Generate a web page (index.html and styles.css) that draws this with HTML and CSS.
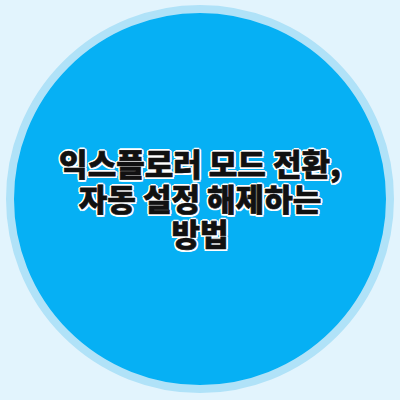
FILE: index.html
```html
<!DOCTYPE HTML>
<html>
<head>
	<meta http-equiv="content-type" content="text/html; charset=utf-8" />
	<title>익스플로러 모드 전환</title>
	<link rel="stylesheet" href="styles.css">
</head>
<body>
	<div class="page">
		<div class="circle">
			<h1 class="title">익스플로러 모드 전환,<br>자동 설정 해제하는<br>방법</h1>
		</div>
	</div>
</body>
</html>
```

FILE: styles.css
```css
 /* Страница */
* {
	margin: 0;
	padding: 0;
	box-sizing: border-box;
}

html, body {
	width: 100%;
	height: 100%;
	background-color: #e2f4fd;
}

.page {
	width: 400px;
	height: 400px;
	padding: 5px 6px 7px 6px;
	display: flex;
	align-items: center;
	justify-content: center;
}

 /* Круг */

.circle {
	width: 388px;
	height: 388px;
	border-radius: 50%;
	border: 8px solid #b0e2f8;
	background-color: #06b0f4;
	display: flex;
	align-items: center;
	justify-content: center;
	padding-bottom: 4px;
}

 /* Заголовок */

.title {
	font-family: "Noto Sans CJK KR", "Noto Sans", sans-serif;
	font-weight: 900;
	font-size: 31px;
	line-height: 35px;
	color: #111;
	text-align: center;
	-webkit-text-stroke: 0.7px #111;
	text-shadow:
		2px 0 0 #fff, -2px 0 0 #fff, 0 2px 0 #fff, 0 -2px 0 #fff,
		1.5px 1.5px 0 #fff, -1.5px 1.5px 0 #fff, 1.5px -1.5px 0 #fff, -1.5px -1.5px 0 #fff;
}
```
